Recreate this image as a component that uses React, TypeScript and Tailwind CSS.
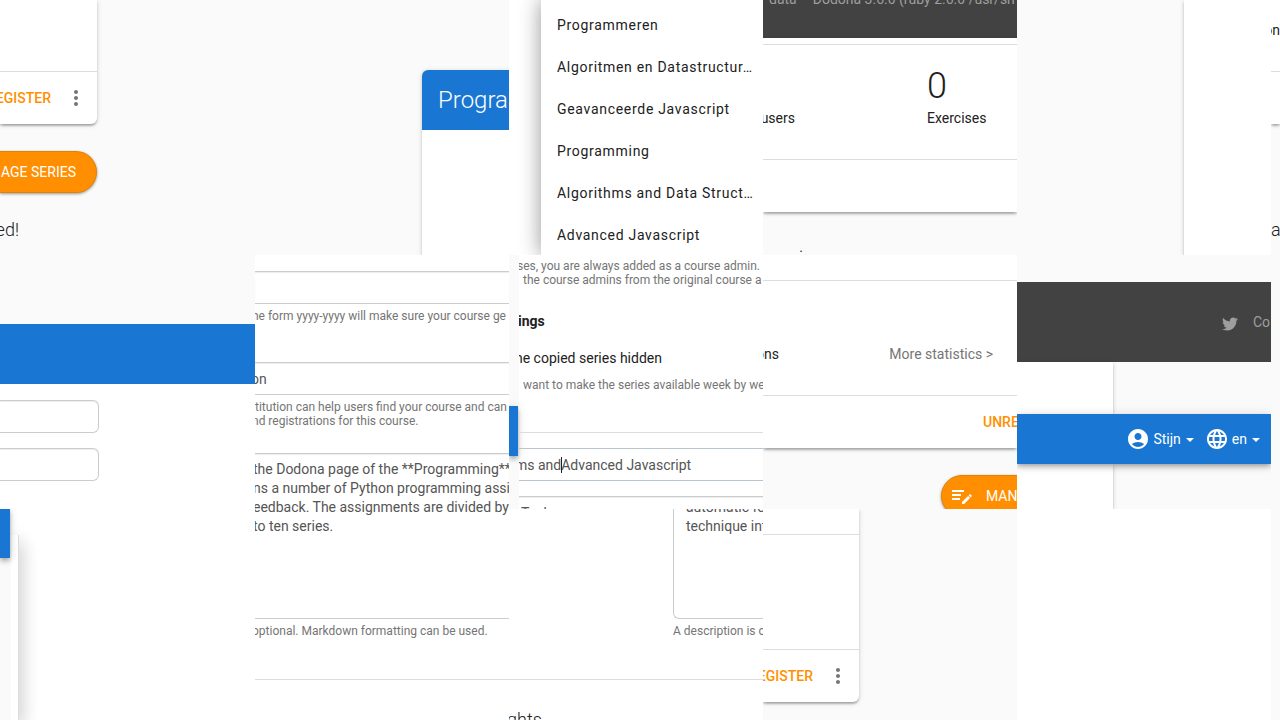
import type { ReactNode } from "react";
import { MdAccountCircle, MdLanguage, MdMoreVert } from "react-icons/md";
import { FaTwitter } from "react-icons/fa";

const courses = [
  "Programmeren",
  "Algoritmen en Datastructur…",
  "Geavanceerde Javascript",
  "Programming",
  "Algorithms and Data Struct…",
  "Advanced Javascript",
];

const description = [
  "the Dodona page of the **Programming**",
  "ns a number of Python programming assi",
  "eedback. The assignments are divided by p",
  "to ten series.",
].join("\n");

const cardShadow =
  "shadow-[0_2px_2px_rgba(0,0,0,0.14),0_3px_3px_-2px_rgba(0,0,0,0.2),0_1px_5px_rgba(0,0,0,0.16)]";
const barShadow =
  "shadow-[0_4px_5px_rgba(0,0,0,0.14),0_1px_10px_rgba(0,0,0,0.14),0_2px_4px_-1px_rgba(0,0,0,0.2)]";
const fieldBase =
  "block bg-white text-sm text-[#555555] border-[#cccccc] shadow-[inset_0_1px_1px_rgba(0,0,0,0.075)] outline-none";

function Help({ children, className = "" }: { children: ReactNode; className?: string }) {
  return (
    <p className={`whitespace-nowrap text-xs leading-[14px] text-[#757575] ${className}`}>
      {children}
    </p>
  );
}

function CardActions() {
  return (
    <div className="flex h-[52px] items-center justify-end gap-[13px] pr-[9px]">
      <button className="text-sm font-medium text-[#ff8f00]">EGISTER</button>
      <button aria-label="More actions" className="text-[#757575]">
        <MdMoreVert size={24} />
      </button>
    </div>
  );
}

function Caret() {
  return (
    <svg width="8" height="4" viewBox="0 0 8 4" fill="currentColor" className="mt-[2px] ml-[2px]">
      <path d="M0 0h8L4 4z" />
    </svg>
  );
}

function PlaylistEdit() {
  return (
    <svg width="24" height="24" viewBox="0 0 24 24" fill="currentColor" className="shrink-0">
      <path d="M2,6V8H14V6H2M2,10V12H11V10H2M20.04,10.13C19.9,10.13 19.76,10.19 19.65,10.3L18.65,11.3L20.7,13.35L21.7,12.35C21.92,12.14 21.92,11.79 21.7,11.58L20.42,10.3C20.31,10.19 20.18,10.13 20.04,10.13M18.07,11.88L12,17.94V20H14.06L20.12,13.93L18.07,11.88M2,14V16H10V14H2Z" />
    </svg>
  );
}

export default function App() {
  return (
    <main className="grid min-h-screen w-full grid-cols-[255fr_254fr_254fr_254fr_254fr_9fr] grid-rows-[255px_254px_minmax(211px,1fr)] overflow-hidden bg-[#fafafa] font-[Roboto,sans-serif] text-sm text-[#212121]">
      {/* Course card and series button */}
      <section className="col-start-1 row-start-1 min-w-0 overflow-hidden">
        <div className={`w-[97px] rounded-br-md bg-white ${cardShadow}`}>
          <div className="h-[72px] border-b border-[#dddddd]" />
          <CardActions />
        </div>
        <button className="mt-[27px] flex h-[42px] w-[97px] items-center justify-end rounded-r-full border-y border-r border-[#e68100] bg-[#ff8f00] pr-5 whitespace-nowrap text-white shadow-[0_1px_3px_rgba(0,0,0,0.4)]">
          AGE SERIES
        </button>
        <p className="mt-[25px] flex w-[19px] justify-end text-lg leading-6 font-light">ed!</p>
      </section>

      {/* Course card header */}
      <section className="col-start-2 row-start-1 flex min-w-0 overflow-hidden pt-[70px] pl-[167px]">
        <div className={`flex-1 rounded-tl-md bg-white ${cardShadow}`}>
          <h2 className="flex h-[60px] items-center overflow-hidden rounded-tl-md bg-[#1976d2] pl-4 text-2xl font-light text-white">
            Program
          </h2>
        </div>
      </section>

      {/* Course menu */}
      <nav className="col-start-3 row-start-1 min-w-0 overflow-hidden bg-white pl-8">
        <ul className="h-full bg-white pt-1 shadow-[0_0_17px_rgba(0,0,0,0.25),0_0_24px_rgba(0,0,0,0.19)]">
          {courses.map((name) => (
            <li key={name}>
              <button className="flex h-[42px] items-center pl-4 tracking-wider whitespace-nowrap">
                {name}
              </button>
            </li>
          ))}
        </ul>
      </nav>

      {/* Footer and exercise statistics */}
      <section className="col-start-4 row-start-1 min-w-0 overflow-hidden">
        <div className="flex h-[38px] gap-4 overflow-hidden bg-[#424242] pl-[6px] whitespace-nowrap text-[#9e9e9e]">
          <span className="-mt-[11px]">data</span>
          <span className="-mt-[11px]">Dodona 3.6.0 (ruby 2.6.0 /usr/sh</span>
        </div>
        <div className={`bg-white pt-[6px] ${cardShadow}`}>
          <div className="flex h-[116px] border-y border-[#dddddd] pt-[21px]">
            <div className="w-[164px] pt-[42px]">
              <p className="flex w-8 justify-end">users</p>
            </div>
            <div>
              <p className="text-4xl leading-10 font-light">0</p>
              <p className="mt-[2px]">Exercises</p>
            </div>
          </div>
          <div className="h-[52px]" />
        </div>
        <p className="mt-[22px] pl-9 text-lg leading-6 font-light">.</p>
      </section>

      {/* Card edge */}
      <section className="col-start-5 row-start-1 min-w-0 overflow-hidden pl-[167px]">
        <div className={`h-full bg-white ${cardShadow}`} />
      </section>

      <section className="col-start-6 row-start-1 min-w-0 overflow-hidden">
        <div className={`bg-white ${cardShadow}`}>
          <div className="flex h-[72px] justify-end border-b border-[#dddddd] pt-5">
            <span>on</span>
          </div>
          <div className="h-[52px]" />
        </div>
        <p className="mt-[94px] text-lg leading-6 font-light">a</p>
      </section>

      {/* Form header with fields */}
      <section className="col-start-1 row-start-2 min-w-0 overflow-hidden pt-[69px]">
        <div className="h-[60px] bg-[#1976d2]" />
        <div className="flex h-[125px] flex-col gap-[15px] bg-white pt-4">
          <input
            aria-label="Name"
            className={`${fieldBase} h-[33px] w-[99px] rounded-r-md border-y border-r`}
          />
          <input
            aria-label="Teacher"
            className={`${fieldBase} h-[33px] w-[99px] rounded-r-md border-y border-r`}
          />
        </div>
      </section>

      {/* Course form */}
      <section className="col-start-2 row-span-2 row-start-2 min-w-0 overflow-hidden bg-white pt-4">
        <input aria-label="Academic year" className={`${fieldBase} h-[33px] w-full border-y`} />
        <Help className="mt-[5px] -ml-[3px]">he form yyyy-yyyy will make sure your course ge</Help>
        <input
          aria-label="Institution"
          defaultValue="on"
          className={`${fieldBase} mt-[39px] -ml-1 h-[33px] w-[calc(100%+4px)] border-y`}
        />
        <Help className="mt-[5px]">titution can help users find your course and can</Help>
        <Help className="-ml-[3px]">nd registrations for this course.</Help>
        <textarea
          aria-label="Description"
          defaultValue={description}
          className={`${fieldBase} mt-[25px] -ml-1 h-[166px] w-[calc(100%+4px)] resize-none overflow-hidden border-y pt-[6px] pl-[2px] leading-[19px] whitespace-pre`}
        />
        <Help className="mt-[5px] -ml-[3px]">optional. Markdown formatting can be used.</Help>
        <hr className="mt-[41px] border-[#dddddd]" />
      </section>

      {/* Copy options */}
      <section className="col-start-3 row-start-2 flex min-w-0 overflow-hidden bg-white">
        <div className="w-[10px] shrink-0 bg-[#fafafa] pt-[151px]">
          <div className={`h-[50px] w-[9px] bg-[#1976d2] ${barShadow}`} />
        </div>
        <div className="min-w-0 flex-1 overflow-hidden pt-1">
          <Help className="-ml-[2px]">ses, you are always added as a course admin.</Help>
          <Help className="pl-1">the course admins from the original course a</Help>
          <h3 className="mt-6 -ml-px font-bold">ings</h3>
          <p className="mt-[17px] -ml-1 whitespace-nowrap">he copied series hidden</p>
          <Help className="mt-[10px] pl-1">want to make the series available week by we</Help>
          <hr className="mt-10 border-[#dddddd]" />
          <div className="relative mt-[15px]">
            <input
              aria-label="Course name"
              defaultValue="ms andAdvanced Javascript"
              className="-ml-1 block h-[33px] w-[calc(100%+4px)] border-y border-[#b8c4ce] text-[#555555] outline-none"
            />
            <span className="absolute top-[9px] left-[42px] h-4 w-px bg-[#212121]" />
          </div>
          <input
            aria-label="Teacher name"
            defaultValue="Tech"
            className={`${fieldBase} mt-[15px] h-[33px] w-full border-y pl-[2px]`}
          />
        </div>
      </section>

      {/* Submission statistics */}
      <section className="col-start-4 row-start-2 min-w-0 overflow-hidden">
        <div className={`bg-white ${cardShadow}`}>
          <div className="h-[26px] border-b border-[#dddddd]" />
          <div className="flex h-[115px] justify-between border-b border-[#dddddd] pt-[63px] pr-6">
            <span className="flex w-4 justify-end">ons</span>
            <a href="#statistics" className="text-[#757575]">
              More statistics &gt;
            </a>
          </div>
          <div className="flex h-[52px] items-center pl-[220px]">
            <button className="font-medium text-[#ff8f00]">UNRE</button>
          </div>
        </div>
        <button className="mt-[27px] ml-[178px] flex h-[42px] w-[160px] items-center gap-3 rounded-full border border-[#e68100] bg-[#ff8f00] pl-2 text-white shadow-[0_1px_3px_rgba(0,0,0,0.4)]">
          <PlaylistEdit />
          MAN
        </button>
      </section>

      {/* Footer and navigation bar */}
      <section className="col-start-5 row-start-2 flex min-w-0 flex-col overflow-hidden pt-[27px]">
        <footer className="flex h-20 shrink-0 items-center justify-end gap-[15px] overflow-hidden bg-[#424242] pr-px text-[#9e9e9e]">
          <a href="#twitter" aria-label="Twitter">
            <FaTwitter size={16} className="mt-1" />
          </a>
          <a href="#contact">Co</a>
        </footer>
        <div className={`h-[52px] w-24 bg-white ${cardShadow}`} />
        <nav
          className={`relative flex h-[50px] shrink-0 items-center justify-end gap-[11px] bg-[#1976d2] pr-[11px] text-white ${barShadow}`}
        >
          <button className="flex items-center gap-[3px]">
            <MdAccountCircle size={24} />
            Stijn
            <Caret />
          </button>
          <button className="flex items-center gap-[3px]">
            <MdLanguage size={24} />
            en
            <Caret />
          </button>
        </nav>
        <div className={`w-24 flex-1 bg-white ${cardShadow}`} />
      </section>

      {/* Drawer edge */}
      <section className="col-start-1 row-start-3 flex min-w-0 overflow-hidden bg-white">
        <div className="relative w-[11px] bg-[#fafafa]">
          <div className={`h-[49px] w-[10px] bg-[#1976d2] ${barShadow}`} />
        </div>
        <div className="mt-[26px] w-2 border-r border-[#dddddd] bg-white shadow-[0_8px_17px_rgba(0,0,0,0.2),0_6px_20px_rgba(0,0,0,0.19)]" />
      </section>

      {/* Second description field */}
      <section className="col-start-3 row-start-3 min-w-0 overflow-hidden bg-white">
        <div className="ml-[164px]">
          <textarea
            aria-label="Copy description"
            defaultValue={"automatic fe\ntechnique int"}
            className={`${fieldBase} -mt-[11px] h-[121px] w-full resize-none overflow-hidden rounded-bl-md border-b border-l pl-3 leading-[19px] whitespace-pre`}
          />
          <Help className="mt-[5px]">A description is o</Help>
        </div>
        <hr className="mt-[41px] border-[#dddddd]" />
        <h3 className="mt-7 -mb-8 -ml-[2px] text-lg leading-6 font-light">ghts</h3>
      </section>

      {/* Course card end */}
      <section className="col-start-4 row-start-3 min-w-0 overflow-hidden">
        <div className={`w-24 rounded-br-md bg-white ${cardShadow}`}>
          <div className="h-[26px] border-b border-[#dddddd]" />
          <div className="h-[115px] border-b border-[#dddddd]" />
          <CardActions />
        </div>
      </section>

      <section className="col-start-5 row-start-3 bg-white" />
    </main>
  );
}
